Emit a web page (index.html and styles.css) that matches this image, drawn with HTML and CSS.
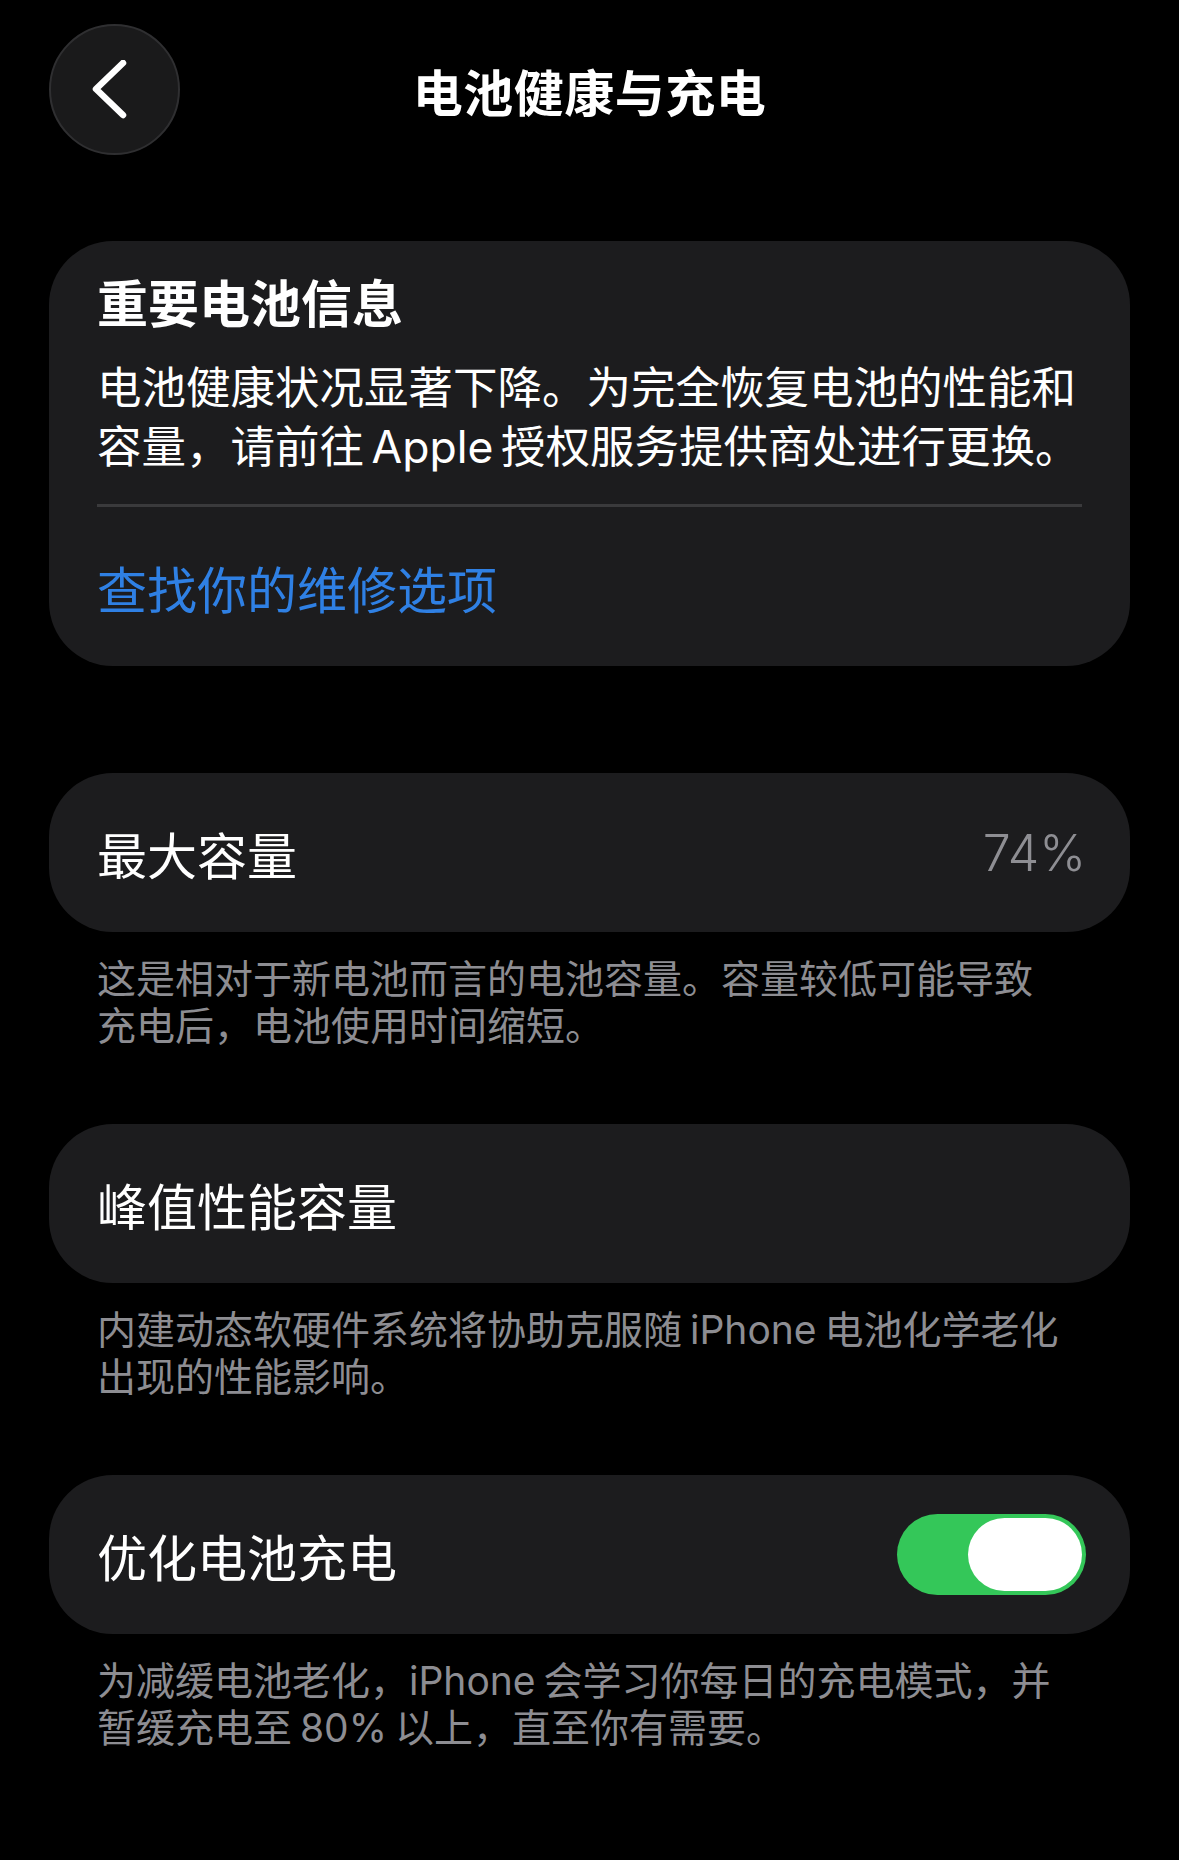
FILE: index.html
```html
<!DOCTYPE html>
<html lang="zh-CN">
<head>
  <meta charset="UTF-8">
  <title>电池健康与充电</title>
  <link rel="stylesheet" href="styles.css">
</head>
<body>

  <header class="nav-bar">
    <button class="back-button" aria-label="返回">
      <svg width="40" height="60" viewBox="0 0 40 60">
        <path d="M33 3 L6 29 L33 55" fill="none" stroke="#fff" stroke-width="6.5" stroke-linecap="round" stroke-linejoin="round"/>
      </svg>
    </button>
    <h1 class="nav-title">电池健康与充电</h1>
    <div class="nav-spacer"></div>
  </header>

  <section class="card info-card">
    <div class="info-body">
      <h2 class="info-title">重要电池信息</h2>
      <p class="info-text">电池健康状况显著下降。为完全恢复电池的性能和容量，请前往 Apple 授权服务提供商处进行更换。</p>
    </div>
    <div class="divider"></div>
    <a class="info-link" href="#">查找你的维修选项</a>
  </section>

  <section class="group">
    <div class="card row">
      <span class="row-label">最大容量</span>
      <span class="row-value">74%</span>
    </div>
    <p class="footnote">这是相对于新电池而言的电池容量。容量较低可能导致充电后，电池使用时间缩短。</p>
  </section>

  <section class="group">
    <div class="card row">
      <span class="row-label">峰值性能容量</span>
    </div>
    <p class="footnote">内建动态软硬件系统将协助克服随 iPhone 电池化学老化出现的性能影响。</p>
  </section>

  <section class="group">
    <div class="card row">
      <span class="row-label">优化电池充电</span>
      <label class="switch">
        <input type="checkbox" checked>
        <span class="knob"></span>
      </label>
    </div>
    <p class="footnote">为减缓电池老化，iPhone 会学习你每日的充电模式，并暂缓充电至 80% 以上，直至你有需要。</p>
  </section>

</body>
</html>
```

FILE: styles.css
```css
body {
  margin: 0;
  padding: 24px 49px 0;
  background-color: #000;
  color: #fff;
  font-family: Inter, "Noto Sans CJK SC", sans-serif;
}

/* top bar */
.nav-bar {
  display: flex;
  align-items: center;
  justify-content: space-between;
  height: 131px;
}

.back-button {
  width: 131px;
  height: 131px;
  border-radius: 50%;
  background-color: #1a1a1b;
  border: 2px solid #2f2f31;
  display: flex;
  align-items: center;
  justify-content: center;
  padding: 0 10px 0 0;
  cursor: pointer;
}

.nav-title {
  margin: 0;
  font-size: 50px;
  font-weight: 600;
  letter-spacing: 0.5px;
}

.nav-spacer {
  width: 131px;
}

/* cards */
.card {
  background-color: #1c1c1e;
  border-radius: 64px;
}

.info-card {
  margin-top: 86px;
  padding: 0 48px;
}

.info-body {
  padding: 34px 0 27px;
}

.info-title {
  margin: 0;
  font-size: 51px;
  line-height: 60px;
  font-weight: 700;
}

.info-text {
  margin: 24px -10px 0 0;
  font-size: 44.5px;
  line-height: 59px;
  word-spacing: -5px;
}

.divider {
  height: 3px;
  background-color: #3a3a3c;
}

.info-link {
  display: flex;
  align-items: center;
  height: 159px;
  font-size: 50px;
  color: #2f80e4;
  text-decoration: none;
}

.group {
  margin-top: 107px;
}

.group + .group {
  margin-top: 75px;
}

.row {
  display: flex;
  align-items: center;
  justify-content: space-between;
  height: 159px;
  padding: 0 44px 0 48px;
}

.row-label {
  font-size: 50px;
}

.row-value {
  font-size: 50px;
  font-weight: 300;
  color: #8e8e93;
}

.footnote {
  margin: 24px 0 0;
  padding: 0 61px 0 48px;
  font-size: 39px;
  line-height: 46.5px;
  word-spacing: -3px;
  color: #8d8d92;
}

/* toggle */
.switch {
  position: relative;
  width: 189px;
  height: 81px;
}

.switch input {
  display: none;
}

.knob {
  position: absolute;
  inset: 0;
  border-radius: 41px;
  background-color: #34c759;
}

.knob::after {
  content: "";
  position: absolute;
  top: 4px;
  right: 4px;
  width: 114px;
  height: 73px;
  border-radius: 37px;
  background-color: #fff;
}
```
